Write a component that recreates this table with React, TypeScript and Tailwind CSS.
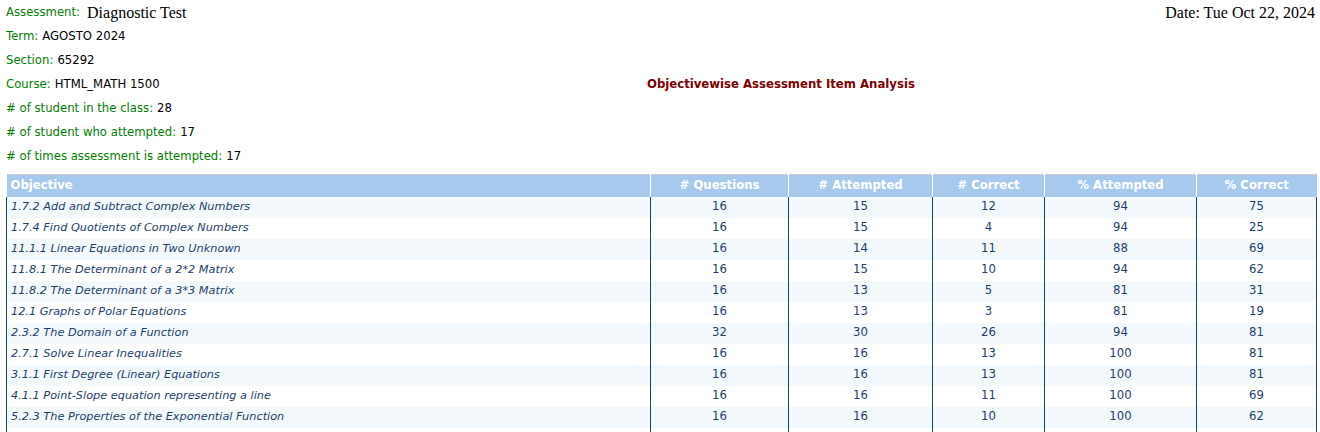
import React from "react";

interface Row {
  objective: string;
  questions: number;
  attempted: number;
  correct: number;
  pctAttempted: number;
  pctCorrect: number;
}

const rows: Row[] = [
  { objective: "1.7.2 Add and Subtract Complex Numbers", questions: 16, attempted: 15, correct: 12, pctAttempted: 94, pctCorrect: 75 },
  { objective: "1.7.4 Find Quotients of Complex Numbers", questions: 16, attempted: 15, correct: 4, pctAttempted: 94, pctCorrect: 25 },
  { objective: "11.1.1 Linear Equations in Two Unknown", questions: 16, attempted: 14, correct: 11, pctAttempted: 88, pctCorrect: 69 },
  { objective: "11.8.1 The Determinant of a 2*2 Matrix", questions: 16, attempted: 15, correct: 10, pctAttempted: 94, pctCorrect: 62 },
  { objective: "11.8.2 The Determinant of a 3*3 Matrix", questions: 16, attempted: 13, correct: 5, pctAttempted: 81, pctCorrect: 31 },
  { objective: "12.1 Graphs of Polar Equations", questions: 16, attempted: 13, correct: 3, pctAttempted: 81, pctCorrect: 19 },
  { objective: "2.3.2 The Domain of a Function", questions: 32, attempted: 30, correct: 26, pctAttempted: 94, pctCorrect: 81 },
  { objective: "2.7.1 Solve Linear Inequalities", questions: 16, attempted: 16, correct: 13, pctAttempted: 100, pctCorrect: 81 },
  { objective: "3.1.1 First Degree (Linear) Equations", questions: 16, attempted: 16, correct: 13, pctAttempted: 100, pctCorrect: 81 },
  { objective: "4.1.1 Point-Slope equation representing a line", questions: 16, attempted: 16, correct: 11, pctAttempted: 100, pctCorrect: 69 },
  { objective: "5.2.3 The Properties of the Exponential Function", questions: 16, attempted: 16, correct: 10, pctAttempted: 100, pctCorrect: 62 },
];

const InfoLine = ({ label, value }: { label: string; value: string }) => (
  <div className="h-6 flex items-center">
    <span className="text-[#008000]">{label}</span>
    <span className="ml-1 text-black">{value}</span>
  </div>
);

const App = () => {
  return (
    <div className="min-h-screen bg-white px-[6px] pt-[1px] font-['Verdana','DejaVu_Sans',sans-serif] text-[11.7px]">
      <div className="h-6 flex items-center justify-between">
        <div className="flex items-center">
          <span className="text-[#008000]">Assessment:</span>
          <span className="ml-[7px] font-['Liberation_Serif',serif] text-[16px] text-black">Diagnostic Test</span>
        </div>
        <span className="mr-[-1px] font-['Liberation_Serif',serif] text-[16px] text-black">Date: Tue Oct 22, 2024</span>
      </div>
      <InfoLine label="Term:" value="AGOSTO 2024" />
      <InfoLine label="Section:" value="65292" />
      <div className="h-6 flex items-center">
        <div className="w-[641px] flex items-center">
          <span className="text-[#008000]">Course:</span>
          <span className="ml-1 text-black">HTML_MATH 1500</span>
        </div>
        <span className="font-bold text-[#800000]">Objectivewise Assessment Item Analysis</span>
      </div>
      <InfoLine label="# of student in the class:" value="28" />
      <InfoLine label="# of student who attempted:" value="17" />
      <InfoLine label="# of times assessment is attempted:" value="17" />

      <table className="mt-[5px] w-[1310px] table-fixed border-collapse">
        <colgroup>
          <col className="w-[644px]" />
          <col className="w-[138px]" />
          <col className="w-[144px]" />
          <col className="w-[112px]" />
          <col className="w-[152px]" />
          <col className="w-[120px]" />
        </colgroup>
        <thead>
          <tr className="h-[22px] bg-[#a7c9ee] border-t border-[#d0d0d0] text-white font-bold">
            <th className="px-1 text-left font-bold">Objective</th>
            <th className="border-l border-white font-bold">&#35; Questions</th>
            <th className="border-l border-white font-bold">&#35; Attempted</th>
            <th className="border-l border-white font-bold">&#35; Correct</th>
            <th className="border-l border-white font-bold">% Attempted</th>
            <th className="border-l border-white font-bold">% Correct</th>
          </tr>
        </thead>
        <tbody className="text-[#1d3e6e]">
          {rows.map((r, i) => (
            <tr key={r.objective} className={i % 2 === 0 ? "h-[21px] bg-[#f4f9fe]" : "h-[21px] bg-white"}>
              <td className="border-l border-[#0f4477] px-1 italic text-[11.3px]">{r.objective}</td>
              <td className="border-l border-[#0f4477] text-center">{r.questions}</td>
              <td className="border-l border-[#0f4477] text-center">{r.attempted}</td>
              <td className="border-l border-[#0f4477] text-center">{r.correct}</td>
              <td className="border-l border-[#0f4477] text-center">{r.pctAttempted}</td>
              <td className="border-x border-[#0f4477] text-center">{r.pctCorrect}</td>
            </tr>
          ))}
          <tr className="h-[21px] bg-white">
            <td className="border-l border-[#0f4477]" />
            <td className="border-l border-[#0f4477]" />
            <td className="border-l border-[#0f4477]" />
            <td className="border-l border-[#0f4477]" />
            <td className="border-l border-[#0f4477]" />
            <td className="border-x border-[#0f4477]" />
          </tr>
        </tbody>
      </table>
    </div>
  );
};

export default App;
